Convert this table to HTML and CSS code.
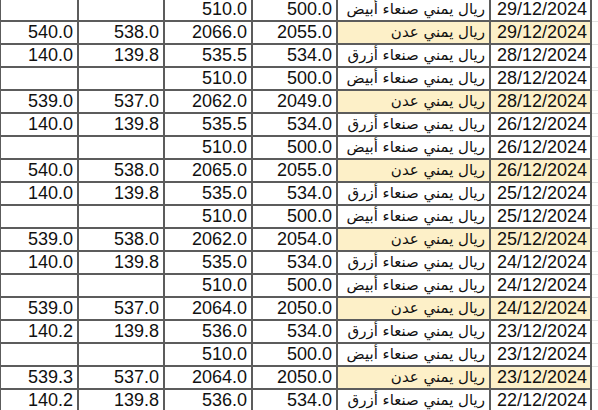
FILE: index.html
```html
<!DOCTYPE html>
<html lang="ar">
<head>
<meta charset="utf-8">
<title>أسعار الصرف</title>
<link rel="stylesheet" href="styles.css">
</head>
<body>
<table class="sheet">
<colgroup>
<col class="c1"><col class="c2"><col class="c3"><col class="c4"><col class="c5"><col class="c6"><col class="c7">
</colgroup>
<tbody>
<tr><td></td><td></td><td>510.0</td><td>500.0</td><td class="ar">ريال يمني صنعاء أبيض</td><td class="dt">29/12/2024</td><td class="pad"></td></tr>
<tr class="aden"><td>540.0</td><td>538.0</td><td>2066.0</td><td>2055.0</td><td class="ar">ريال يمني عدن</td><td class="dt">29/12/2024</td><td class="pad"></td></tr>
<tr><td>140.0</td><td>139.8</td><td>535.5</td><td>534.0</td><td class="ar">ريال يمني صنعاء أزرق</td><td class="dt">28/12/2024</td><td class="pad"></td></tr>
<tr><td></td><td></td><td>510.0</td><td>500.0</td><td class="ar">ريال يمني صنعاء أبيض</td><td class="dt">28/12/2024</td><td class="pad"></td></tr>
<tr class="aden"><td>539.0</td><td>537.0</td><td>2062.0</td><td>2049.0</td><td class="ar">ريال يمني عدن</td><td class="dt">28/12/2024</td><td class="pad"></td></tr>
<tr><td>140.0</td><td>139.8</td><td>535.5</td><td>534.0</td><td class="ar">ريال يمني صنعاء أزرق</td><td class="dt">26/12/2024</td><td class="pad"></td></tr>
<tr><td></td><td></td><td>510.0</td><td>500.0</td><td class="ar">ريال يمني صنعاء أبيض</td><td class="dt">26/12/2024</td><td class="pad"></td></tr>
<tr class="aden"><td>540.0</td><td>538.0</td><td>2065.0</td><td>2055.0</td><td class="ar">ريال يمني عدن</td><td class="dt">26/12/2024</td><td class="pad"></td></tr>
<tr><td>140.0</td><td>139.8</td><td>535.0</td><td>534.0</td><td class="ar">ريال يمني صنعاء أزرق</td><td class="dt">25/12/2024</td><td class="pad"></td></tr>
<tr><td></td><td></td><td>510.0</td><td>500.0</td><td class="ar">ريال يمني صنعاء أبيض</td><td class="dt">25/12/2024</td><td class="pad"></td></tr>
<tr class="aden"><td>539.0</td><td>538.0</td><td>2062.0</td><td>2054.0</td><td class="ar">ريال يمني عدن</td><td class="dt">25/12/2024</td><td class="pad"></td></tr>
<tr><td>140.0</td><td>139.8</td><td>535.0</td><td>534.0</td><td class="ar">ريال يمني صنعاء أزرق</td><td class="dt">24/12/2024</td><td class="pad"></td></tr>
<tr><td></td><td></td><td>510.0</td><td>500.0</td><td class="ar">ريال يمني صنعاء أبيض</td><td class="dt">24/12/2024</td><td class="pad"></td></tr>
<tr class="aden"><td>539.0</td><td>537.0</td><td>2064.0</td><td>2050.0</td><td class="ar">ريال يمني عدن</td><td class="dt">24/12/2024</td><td class="pad"></td></tr>
<tr><td>140.2</td><td>139.8</td><td>536.0</td><td>534.0</td><td class="ar">ريال يمني صنعاء أزرق</td><td class="dt">23/12/2024</td><td class="pad"></td></tr>
<tr><td></td><td></td><td>510.0</td><td>500.0</td><td class="ar">ريال يمني صنعاء أبيض</td><td class="dt">23/12/2024</td><td class="pad"></td></tr>
<tr class="aden"><td>539.3</td><td>537.0</td><td>2064.0</td><td>2050.0</td><td class="ar">ريال يمني عدن</td><td class="dt">23/12/2024</td><td class="pad"></td></tr>
<tr><td>140.2</td><td>139.8</td><td>536.0</td><td>534.0</td><td class="ar">ريال يمني صنعاء أزرق</td><td class="dt">22/12/2024</td><td class="pad"></td></tr>
</tbody>
</table>
</body>
</html>
```
FILE: styles.css
```css
html, body {
  margin: 0;
  padding: 0;
  background: #ffffff;
  overflow: hidden;
}

.sheet {
  border-collapse: collapse;
  table-layout: fixed;
  width: 609px;
  margin: -3px 0 0 -1px;
  font-family: "Liberation Sans", "DejaVu Sans", sans-serif;
  font-size: 18px;
  color: #111111;
}

.c1 { width: 78px; }
.c2 { width: 86px; }
.c3 { width: 88px; }
.c4 { width: 85px; }
.c5 { width: 153px; }
.c6 { width: 101px; }
.c7 { width: 18px; }

.sheet td {
  height: 23px;
  padding: 0 4px 0 0;
  border: 2px solid #5c5c5c;
  text-align: right;
  white-space: nowrap;
  overflow: hidden;
  line-height: 19px;
  box-sizing: border-box;
}

.sheet td.pad {
  border: none;
  border-bottom: 1px solid #e2e2e2;
}

.sheet td.ar {
  direction: rtl;
  text-align: right;
  padding: 0 4px 0 0;
  font-family: "DejaVu Sans", sans-serif;
  font-size: 15px;
}

.sheet td.dt {
  padding-right: 3px;
}

.aden td.ar,
.aden td.dt {
  background: #fdf0c8;
}
```
